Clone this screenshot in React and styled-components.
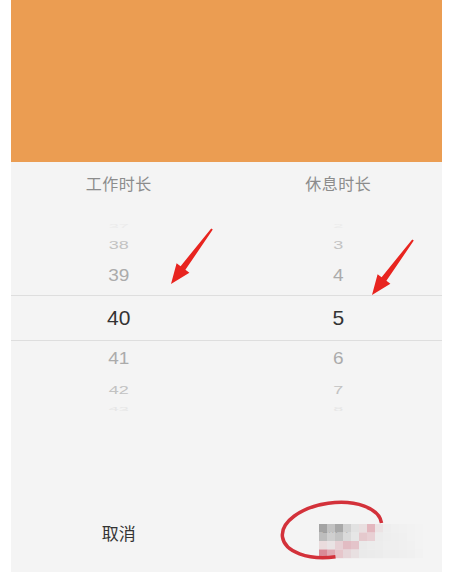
import styled, { createGlobalStyle } from 'styled-components';

const GlobalStyle = createGlobalStyle`
  html, body {
    margin: 0;
    padding: 0;
    background: #fff;
  }
  body {
    font-family: "Noto Sans CJK SC", "Liberation Sans", sans-serif;
  }
`;

const Page = styled.div`
  position: relative;
  width: 451px;
  height: 586px;
  padding: 0 9px 0 11px;
  box-sizing: border-box;
  background: #fff;
  overflow: hidden;
`;

const Header = styled.div`
  height: 162px;
  background: #eb9d52;
`;

const Sheet = styled.div`
  height: 410px;
  background: #f4f4f4;
  display: flex;
  flex-direction: column;
`;

const Labels = styled.div`
  display: grid;
  grid-template-columns: 1fr 1fr;
  height: 57px;
  padding-top: 10px;
  box-sizing: border-box;
`;

const Label = styled.div`
  text-align: center;
  font-size: 16px;
  line-height: 22px;
  color: #8c8c8c;
  letter-spacing: 0.5px;
  padding-left: ${p => p.$shift || 0}px;
`;

const Wheels = styled.div`
  display: grid;
  grid-template-columns: 1fr 1fr;
`;

const Wheel = styled.div`
  display: flex;
  flex-direction: column;
`;

const Item = styled.div`
  height: ${p => p.$h}px;
  display: flex;
  align-items: center;
  justify-content: center;
  box-sizing: border-box;
  font-family: "Liberation Sans", "Noto Sans", sans-serif;
  font-size: ${p => p.$size}px;
  color: ${p => p.$color};
  padding-left: ${p => p.$shift || 0}px;
  border-top: ${p => (p.$active ? '1px solid #dedede' : 'none')};
  border-bottom: ${p => (p.$active ? '1px solid #dedede' : 'none')};
  overflow: hidden;

  span {
    display: block;
    transform: scaleY(${p => p.$scale});
  }
`;

const Footer = styled.div`
  margin-top: auto;
  height: 78px;
  display: grid;
  grid-template-columns: 1fr 1fr;
  align-items: center;
`;

const Action = styled.div`
  text-align: center;
  font-size: 17px;
  color: #333;
  padding-left: ${p => p.$shift || 0}px;
  padding-bottom: 2px;
`;

const Overlay = styled.svg`
  position: absolute;
  left: 0;
  top: 0;
  pointer-events: none;
`;

const rows = [
  { h: 14, size: 18, scale: 0.25, color: '#ebebeb' },
  { h: 24, size: 18, scale: 0.62, color: '#c2c2c2' },
  { h: 38, size: 19, scale: 0.88, color: '#ababab' },
  { h: 46, size: 21, scale: 1, color: '#333', active: true },
  { h: 36, size: 19, scale: 0.88, color: '#ababab' },
  { h: 26, size: 18, scale: 0.62, color: '#c2c2c2' },
  { h: 12, size: 18, scale: 0.25, color: '#e6e6e6' },
];

const work = ['37', '38', '39', '40', '41', '42', '43'];
const rest = ['2', '3', '4', '5', '6', '7', '8'];

const mosaic = [
  ['#a3a3a3', '#c2c2c2', '#a8a8a8', '#d0d0d0', '#e2e2e2', '#e9dfe0', '#e3b7be', '#ebe3e4', '#eeeeee', '#f0f0f0', '#f1f1f1', '#f2f2f2', '#f3f3f3'],
  ['#bdbdbd', '#cfcfcf', '#c4c4c4', '#dadada', '#e6e6e6', '#e5c9cd', '#e8d0d4', '#ececec', '#eeeeee', '#efefef', '#f0f0f0', '#f2f2f2', '#f3f3f3'],
  ['#eadcdd', '#e9e3e4', '#e6d0d4', '#e2bcc3', '#e4c4ca', '#eaeaea', '#ececec', '#ededed', '#efefef', '#efefef', '#f0f0f0', '#f1f1f1', '#f3f3f3'],
  ['#d98a96', '#e0aab3', '#e6c6cb', '#e6d6d9', '#e8e0e1', '#eaeaea', '#ebebeb', '#ececec', '#eeeeee', '#eeeeee', '#efefef', '#f0f0f0', '#f2f2f2'],
];

const arrow = '212.8,229.6 185.4,269.8 189.4,272.8 171,284 176.6,263.2 180.6,266.2 211.2,228.4';

function WheelColumn({ values, shift }) {
  return (
    <Wheel>
      {values.map((v, i) => (
        <Item
          key={v}
          $h={rows[i].h}
          $size={rows[i].size}
          $scale={rows[i].scale}
          $color={rows[i].color}
          $active={rows[i].active}
          $shift={shift}
        >
          <span>{v}</span>
        </Item>
      ))}
    </Wheel>
  );
}

export default function App() {
  return (
    <>
      <GlobalStyle />
      <Page>
        <Header />
        <Sheet>
          <Labels>
            <Label>工作时长</Label>
            <Label $shift={8}>休息时长</Label>
          </Labels>
          <Wheels>
            <WheelColumn values={work} />
            <WheelColumn values={rest} shift={8} />
          </Wheels>
          <Footer>
            <Action>取消</Action>
            <Action $shift={8}>确定</Action>
          </Footer>
        </Sheet>
        <Overlay width="451" height="586" viewBox="0 0 451 586">
          <g>
            {mosaic.map((row, r) =>
              row.map((c, k) => (
                <rect key={`${r}-${k}`} x={319 + k * 8} y={524 + r * 8.5} width="8.2" height="8.7" fill={c} />
              ))
            )}
          </g>
          <ellipse
            cx="332"
            cy="530"
            rx="50"
            ry="27"
            transform="rotate(-8 332 530)"
            fill="none"
            stroke="#d3313a"
            strokeWidth="3.5"
            strokeDasharray="190 62"
            strokeDashoffset="-62"
          />
          <polygon points={arrow} fill="#e8241f" />
          <polygon points={arrow} fill="#e8241f" transform="translate(201 11)" />
        </Overlay>
      </Page>
    </>
  );
}
